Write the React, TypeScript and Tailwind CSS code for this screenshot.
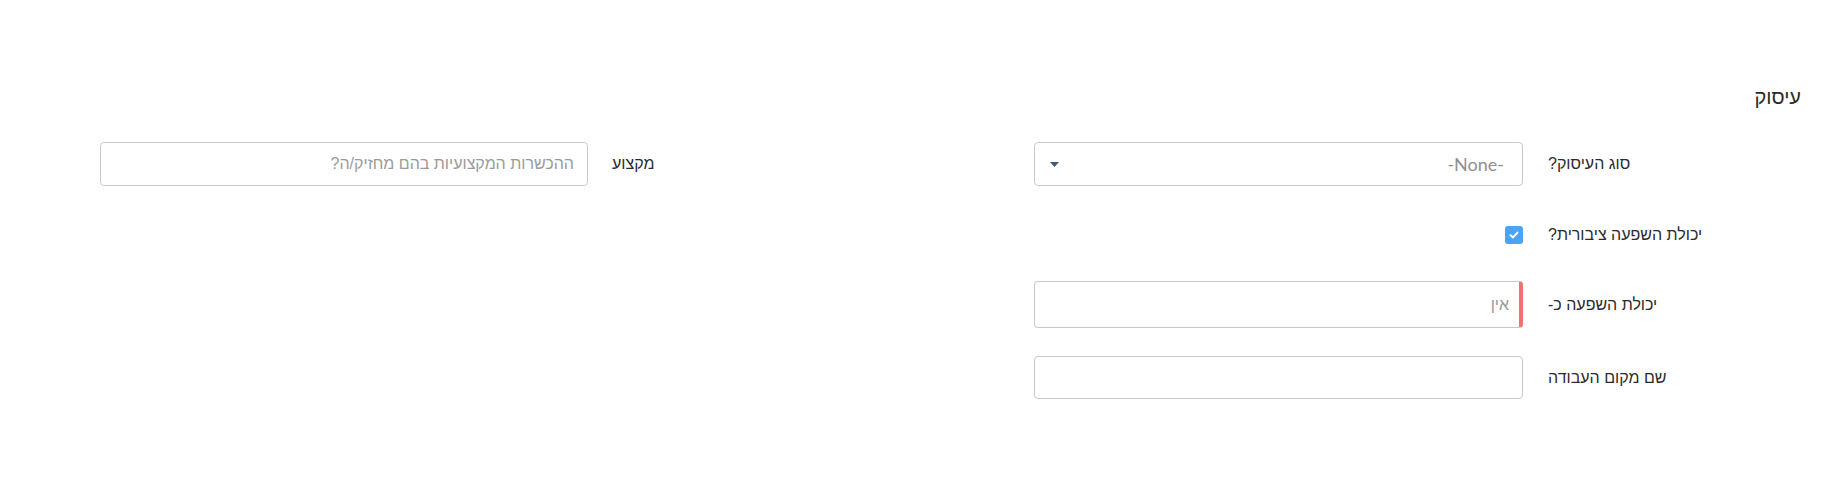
const Field = ({ label, children, labelWidth = "w-[253px]", gap = "gap-[25px]", height = "h-[44px]" }: { label: string; children: React.ReactNode; labelWidth?: string; gap?: string; height?: string }) => {
  return (
    <div className={`flex items-center ${gap} ${height}`}>
      <div className={`${labelWidth} shrink-0 text-left text-[16px] text-[#2b2b2b]`}>{label}</div>
      <div className="flex-1 h-full flex items-center">{children}</div>
    </div>
  );
};

const App = () => {
  return (
    <div
      dir="rtl"
      className="w-[1835px] h-[482px] bg-white pt-[84px] pr-[34px] pl-[100px]"
      style={{ fontFamily: '"Liberation Sans", Arial, sans-serif' }}
    >
      {/* section title */}
      <h2 className="h-[26px] leading-[26px] text-[20px] text-[#2b2b2b]">עיסוק</h2>

      <div className="mt-[32px] flex justify-between">
        {/* right column */}
        <div className="w-[767px] flex flex-col">
          <Field label="סוג העיסוק?">
            <div className="w-full h-full border border-[#c9c9c9] rounded-[4px] flex items-center justify-between pr-[18px] pl-[15px]">
              <span className="text-[18px] text-[#8f8f8f]" style={{ fontFamily: "Lato, sans-serif" }}>-None-</span>
              <svg width="9" height="5" viewBox="0 0 9 5">
                <path d="M0 0 L9 0 L4.5 5 Z" fill="#3e5a74" />
              </svg>
            </div>
          </Field>

          <div className="mt-[40px]">
            <Field label="יכולת השפעה ציבורית?" height="h-[18px]">
              <div className="w-[18px] h-[18px] rounded-[3px] bg-[#4ba3f5] flex items-center justify-center">
                <svg width="10" height="8" viewBox="0 0 10 8">
                  <path d="M1.5 4.2 L4 6.4 L8.5 1.6" stroke="#fff" strokeWidth="2" fill="none" strokeLinecap="round" strokeLinejoin="round" />
                </svg>
              </div>
            </Field>
          </div>

          <div className="mt-[37px]">
            <Field label="יכולת השפעה כ-" height="h-[47px]">
              <div className="w-full h-full border border-[#c9c9c9] border-r-[4px] border-r-[#ee7370] rounded-[4px] flex items-center pr-[10px]">
                <span className="text-[16px] text-[#9a9a9a]">אין</span>
              </div>
            </Field>
          </div>

          <div className="mt-[28px]">
            <Field label="שם מקום העבודה" height="h-[43px]">
              <div className="w-full h-full border border-[#c9c9c9] rounded-[4px]" />
            </Field>
          </div>
        </div>

        {/* left column */}
        <div className="w-[767px] flex flex-col">
          <Field label="מקצוע" labelWidth="w-[255px]" gap="gap-[24px]">
            <div className="w-full h-full border border-[#c9c9c9] rounded-[4px] flex items-center pr-[13px]">
              <span className="text-[16px] text-[#9a9a9a]">ההכשרות המקצועיות בהם מחזיק/ה?</span>
            </div>
          </Field>
        </div>
      </div>
    </div>
  );
};

export default App;
